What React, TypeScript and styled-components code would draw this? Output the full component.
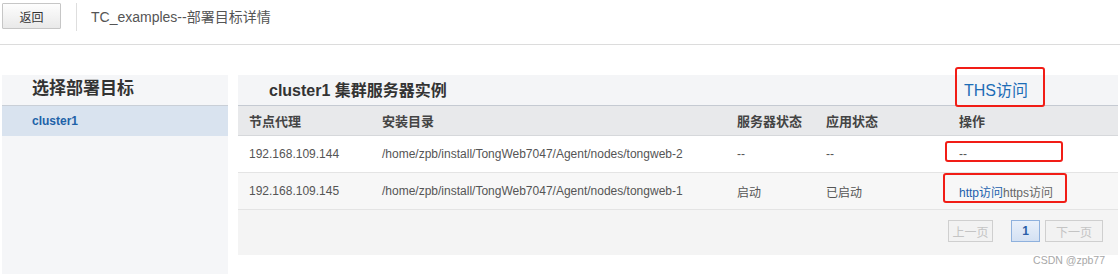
import React from "react";
import styled, { createGlobalStyle, css } from "styled-components";

const GlobalStyle = createGlobalStyle`
  html, body {
    margin: 0;
    padding: 0;
    background: #ffffff;
    font-family: "Liberation Sans", "Noto Sans CJK SC", sans-serif;
    color: #555;
  }
  * { box-sizing: border-box; }
`;

const Page = styled.div`
  position: relative;
  width: 1120px;
  height: 274px;
  overflow: hidden;
`;

const TopBar = styled.div`
  height: 45px;
  border-bottom: 1px solid #dcdcdc;
  display: flex;
  align-items: flex-start;
  padding: 3px 0 0 2px;
`;

const BackButton = styled.button`
  width: 59px;
  height: 26px;
  border: 1px solid #c6c6c6;
  border-radius: 1px;
  background: linear-gradient(#fdfdfd, #e9e9e9);
  font-family: inherit;
  font-size: 12px;
  color: #333;
  padding: 0;
  cursor: pointer;
`;

const Divider = styled.div`
  width: 1px;
  height: 28px;
  background: #dedede;
  margin-left: 15px;
`;

const PageTitle = styled.div`
  margin-left: 14px;
  line-height: 28px;
  font-size: 14px;
  color: #555;
`;

const Content = styled.div`
  display: flex;
  gap: 10px;
  padding: 30px 2px 0 2px;
`;

const Sidebar = styled.div`
  width: 226px;
  height: 200px;
  background: #f5f6f8;
  flex-shrink: 0;
`;

const SideHeader = styled.div`
  height: 31px;
  line-height: 28px;
  padding-left: 30px;
  font-size: 17px;
  font-weight: bold;
  color: #333;
  border-bottom: 1px solid #c9cfd7;
`;

const SideItem = styled.div<{ $active?: boolean }>`
  height: 30px;
  line-height: 30px;
  padding-left: 30px;
  font-size: 12px;
  font-weight: bold;
  color: #1e62a8;
  ${(p) =>
    p.$active &&
    css`
      background: #d9e3ef;
    `}
`;

const Main = styled.div`
  flex: 1;
  position: relative;
`;

const cols = "133px 355px 89px 133px 1fr";

const MainHeader = styled.div`
  height: 31px;
  display: grid;
  grid-template-columns: 710px 1fr;
  padding-left: 11px;
  padding-bottom: 2px;
  background: #f4f5f7;
  border-bottom: 1px solid #c5cad2;
`;

const MainTitle = styled.div`
  display: flex;
  align-items: center;
  padding-left: 20px;
  font-size: 16px;
  font-weight: bold;
  color: #333;
`;

const HeaderLink = styled.a`
  padding-left: 5px;
  font-size: 16px;
  color: #1c6cb6;
  text-decoration: none;
`;

const Grid = styled.div<{ $head?: boolean; $alt?: boolean }>`
  display: grid;
  grid-template-columns: ${cols};
  padding-left: 11px;
  height: ${(p) => (p.$head ? "30px" : "37px")};
  border-bottom: 1px solid ${(p) => (p.$head ? "#d6d8db" : "#e4e4e4")};
  background: ${(p) => (p.$head ? "#e8e9eb" : p.$alt ? "#f7f7f7" : "#ffffff")};
  font-size: ${(p) => (p.$head ? "13px" : "12px")};
  font-weight: ${(p) => (p.$head ? "bold" : "normal")};
  color: ${(p) => (p.$head ? "#444" : "#555")};
`;

const Cell = styled.div`
  position: relative;
  display: flex;
  align-items: center;
  white-space: nowrap;
`;

const Mark = styled.span<{ $l: number; $t: number; $w: number; $h: number }>`
  position: absolute;
  left: ${(p) => p.$l}px;
  top: ${(p) => p.$t}px;
  width: ${(p) => p.$w}px;
  height: ${(p) => p.$h}px;
  border: 2.5px solid #f11d16;
  border-radius: 3px;
  pointer-events: none;
`;

const Link = styled.a<{ $muted?: boolean }>`
  color: ${(p) => (p.$muted ? "#666" : "#1b5fad")};
  text-decoration: none;
`;

const Pager = styled.div`
  height: 45px;
  background: #f4f4f4;
  display: flex;
  justify-content: flex-end;
  align-items: flex-start;
  padding: 10px 15px 0 0;
`;

const PageButton = styled.button<{ $active?: boolean; $gap?: number }>`
  height: 22px;
  padding: 0;
  margin-left: ${(p) => p.$gap ?? 0}px;
  font-family: inherit;
  font-size: 12px;
  border: 1px solid ${(p) => (p.$active ? "#8fb1dd" : "#cfcfcf")};
  background: ${(p) => (p.$active ? "linear-gradient(#e9f0fa, #d4e1f3)" : "#f2f2f2")};
  color: ${(p) => (p.$active ? "#2a5ea8" : "#c4c4c4")};
  font-weight: ${(p) => (p.$active ? "bold" : "normal")};
`;

const Watermark = styled.div`
  position: absolute;
  right: 15px;
  bottom: 8px;
  font-size: 10.5px;
  line-height: 12px;
  color: #a8a8a8;
`;

const rows = [
  {
    ip: "192.168.109.144",
    dir: "/home/zpb/install/TongWeb7047/Agent/nodes/tongweb-2",
    server: "--",
    app: "--",
  },
  {
    ip: "192.168.109.145",
    dir: "/home/zpb/install/TongWeb7047/Agent/nodes/tongweb-1",
    server: "启动",
    app: "已启动",
  },
];

export default function App() {
  return (
    <Page>
      <GlobalStyle />
      <TopBar>
        <BackButton>返回</BackButton>
        <Divider />
        <PageTitle>TC_examples--部署目标详情</PageTitle>
      </TopBar>
      <Content>
        <Sidebar>
          <SideHeader>选择部署目标</SideHeader>
          <SideItem $active>cluster1</SideItem>
        </Sidebar>
        <Main>
          <MainHeader>
            <MainTitle>cluster1 集群服务器实例</MainTitle>
            <Cell>
              <HeaderLink href="#">THS访问</HeaderLink>
              <Mark $l={-4} $t={-8} $w={90} $h={40} />
            </Cell>
          </MainHeader>
          <Grid $head>
            <Cell>节点代理</Cell>
            <Cell>安装目录</Cell>
            <Cell>服务器状态</Cell>
            <Cell>应用状态</Cell>
            <Cell>操作</Cell>
          </Grid>
          <Grid>
            <Cell>{rows[0].ip}</Cell>
            <Cell>{rows[0].dir}</Cell>
            <Cell>{rows[0].server}</Cell>
            <Cell>{rows[0].app}</Cell>
            <Cell>
              --
              <Mark $l={-14} $t={5} $w={118} $h={21} />
            </Cell>
          </Grid>
          <Grid $alt>
            <Cell>{rows[1].ip}</Cell>
            <Cell>{rows[1].dir}</Cell>
            <Cell>{rows[1].server}</Cell>
            <Cell>{rows[1].app}</Cell>
            <Cell>
              <Link href="#">http访问</Link>
              <Link href="#" $muted>
                https访问
              </Link>
              <Mark $l={-16} $t={0} $w={124} $h={30} />
            </Cell>
          </Grid>
          <Pager>
            <PageButton style={{ width: 45 }}>上一页</PageButton>
            <PageButton $active $gap={18} style={{ width: 29 }}>
              1
            </PageButton>
            <PageButton $gap={5} style={{ width: 58 }}>
              下一页
            </PageButton>
          </Pager>
        </Main>
      </Content>
      <Watermark>CSDN @zpb77</Watermark>
    </Page>
  );
}
